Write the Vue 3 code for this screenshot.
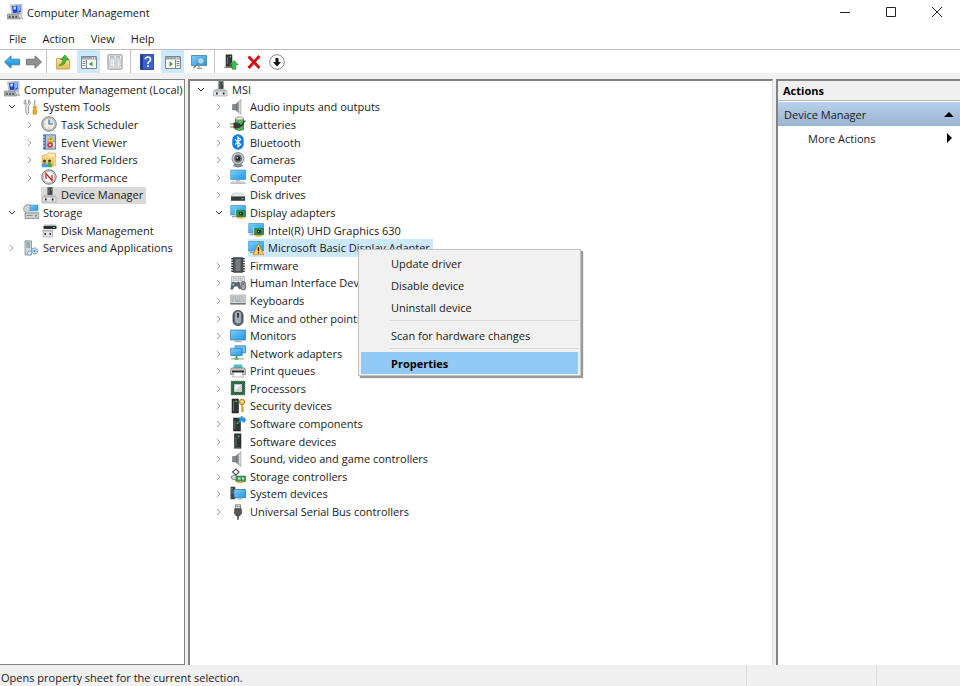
<template>
    <div class="windowBox">
        <svg class="iconSheet" aria-hidden="true">
            <defs>
                <linearGradient id="gScreen" x1="0" y1="0" x2="1" y2="1">
                    <stop offset="0" stop-color="#7cd0fa" />
                    <stop offset="1" stop-color="#1f96e6" />
                </linearGradient>
                <linearGradient id="gBlue" x1="0" y1="0" x2="0" y2="1">
                    <stop offset="0" stop-color="#5cc3f5" />
                    <stop offset="1" stop-color="#1583cf" />
                </linearGradient>
                <linearGradient id="gGrey" x1="0" y1="0" x2="1" y2="0">
                    <stop offset="0" stop-color="#5c6166" />
                    <stop offset="1" stop-color="#c9cdd0" />
                </linearGradient>
                <linearGradient id="gFolder" x1="0" y1="0" x2="0" y2="1">
                    <stop offset="0" stop-color="#fbe6a2" />
                    <stop offset="1" stop-color="#e5b94f" />
                </linearGradient>
            </defs>
            <symbol id="computerMgmt" viewBox="0 0 16 16">
                <path d="M3.500 1 15 .3V9.500L5 10.300z" fill="#cfd5dc" stroke="#98a2ad" stroke-width=".6" />
                <path d="M5 2 13.700 1.400V8.300L6 8.900z" fill="#1c3fd0" />
                <path d="M10 1.700 13.700 1.400V6L10.500 8.500z" fill="#7fb2f7" />
                <path d="M6.500 2.500h2.300v3H6.500z" fill="#dfeaff" />
                <path d="M.5 10h11.500l1 5H.3z" fill="#b6babd" stroke="#6e7377" stroke-width=".6" />
                <path d="M1.700 11.700h2v2.300h-2zM5 11.700h2v2.300H5zM8.300 11.700h2v2.300h-2z" fill="#565d62" />
                <path d="M10.500 9l3.500 1.500 1.700 4.500-3.500-1.500z" fill="#dcdedf" stroke="#777" stroke-width=".5" />
            </symbol>
            <symbol id="tools" viewBox="0 0 16 16">
                <path d="M2.600.8v3.400l1.600 1 1.500-1V.8C7.300 1.700 7.700 3.500 7 5L5.600 6.300V14q-1.400 2-2.700 0V6.300L1.400 5C.7 3.500 1.200 1.600 2.600.8z" fill="#eceeef" stroke="#7c8387" stroke-width=".8" />
                <path d="M11.200 1h1.200v6.500h-1.200z" fill="#9da3a8" />
                <path d="M10.300 7.500h3v2l-.6.8.9 1v3.500q-1.800 1.300-3.600 0v-3.500l.9-1-.6-.8z" fill="#f2b01d" stroke="#b3780a" stroke-width=".6" />
            </symbol>
            <symbol id="clock" viewBox="0 0 16 16">
                <circle cx="8" cy="8" r="7.300" fill="#c6c9cc" stroke="#74797e" stroke-width=".9" />
                <circle cx="8" cy="8" r="5.700" fill="#f7f0dc" stroke="#9ba0a5" stroke-width=".5" />
                <path d="M8 8V2.300A5.700 5.700 0 0 1 13.700 8z" fill="#cfdff3" />
                <path d="M8 3.500V8h3.800" fill="none" stroke="#3b5f95" stroke-width="1.100" />
                <path d="M3.500 8h1M8 12.500v-1" stroke="#777" stroke-width=".8" />
            </symbol>
            <symbol id="eventLog" viewBox="0 0 16 16">
                <path d="M2.500.8h12v14.400h-12z" fill="#aec2da" stroke="#4e6f98" stroke-width=".8" />
                <path d="M2.500.8H5v14.400H2.500z" fill="#5a7da8" />
                <path d="M1.300 3h2.400M1.300 6h2.400M1.300 9h2.400M1.300 12h2.400" stroke="#dfe5eb" stroke-width="1" />
                <path d="M9.800 2.300l3.500 5.200H6.300z" fill="#ffd53a" stroke="#c99100" stroke-width=".5" />
                <path d="M9.800 4.200v1.800" stroke="#5a3b00" stroke-width=".8" />
                <circle cx="9" cy="11" r="2.800" fill="#e2362b" />
                <path d="M8 10l2 2m0-2-2 2" stroke="#fff" stroke-width=".8" />
                <path d="M12.300 8.500h1.500v4h-1.500z" fill="#eef3fa" />
            </symbol>
            <symbol id="sharedFolder" viewBox="0 0 16 16">
                <path d="M1 3.500 6 2.500l1-1.500h7.500V14H1z" fill="url(#gFolder)" stroke="#c69b3d" stroke-width=".6" />
                <path d="M8 2.500h5.500v2H8z" fill="#fdf6dc" />
                <path d="M13 5h1.500v9H13z" fill="#f7dc90" />
                <circle cx="3.500" cy="9" r="1.500" fill="#4d3a26" />
                <path d="M1 15.300c0-3.300.8-4.600 2.500-4.600S6 12 6 15.300z" fill="#3f9ed8" />
                <circle cx="8.500" cy="9" r="1.500" fill="#4d3a26" />
                <path d="M6 15.300c0-3.300.8-4.600 2.500-4.600s2.500 1.300 2.500 4.600z" fill="#4ba64d" />
            </symbol>
            <symbol id="performance" viewBox="0 0 16 16">
                <circle cx="8" cy="8" r="7.200" fill="#d5d7d9" stroke="#73777b" stroke-width="1" />
                <circle cx="8" cy="8" r="5.600" fill="#fff" stroke="#999" stroke-width=".5" />
                <path d="M5 10V4.500L11 11.500V6" fill="none" stroke="#d9221b" stroke-width="1.300" />
            </symbol>
            <symbol id="deviceMgr" viewBox="0 0 16 16">
                <path d="M6.500.3h5v8h-5z" fill="#3d4144" />
                <path d="M7.500 1.300h1v5h-1z" fill="#777c80" />
                <path d="M10 2h1v1h-1z" fill="#49dd4d" />
                <path d="M4 8h8l2.500 2H2z" fill="#c9cccf" stroke="#999ea1" stroke-width=".5" />
                <path d="M1.500 10H15v5H1.500z" fill="#e2e4e6" stroke="#9a9fa3" stroke-width=".6" />
                <path d="M4 11.500h1.700v2H4zM10.800 11.500h1.700v2h-1.700z" fill="#24282b" />
            </symbol>
            <symbol id="storage" viewBox="0 0 16 16">
                <circle cx="4.800" cy="4.800" r="4.200" fill="#cfd3d6" stroke="#858b90" stroke-width=".8" />
                <circle cx="4.800" cy="4.800" r="1.200" fill="#fff" stroke="#888" stroke-width=".4" />
                <path d="M7 1h8v5.500H7z" fill="url(#gScreen)" stroke="#3a7fae" stroke-width=".5" />
                <path d="M2 9l1.500-2h11L16 9z" fill="#eceeef" stroke="#9a9fa3" stroke-width=".5" />
                <path d="M2 9h13.800v5.500H2z" fill="#cdd1d4" stroke="#72787d" stroke-width=".7" />
                <path d="M3.500 11h6v1h-6z" fill="#8a8f93" />
                <path d="M12 11h2v1.500h-2z" fill="#35bd3b" />
            </symbol>
            <symbol id="diskMgmt" viewBox="0 0 16 16">
                <path d="M3.500 2.500h11l1 1.500h-13z" fill="#b4b8bb" />
                <path d="M2.500 4h13v3h-13z" fill="#2b3032" />
                <path d="M12 5h2v1h-2z" fill="#46df4b" />
                <path d="M2 9h9.500v6H2z" fill="#e2e4e6" stroke="#959a9e" stroke-width=".6" />
                <path d="M1 8.300h11" stroke="#8e9397" stroke-width=".8" />
                <path d="M3.500 11h1.500v2H3.500zM8.500 11H10v2H8.500z" fill="#333" />
            </symbol>
            <symbol id="services" viewBox="0 0 16 16">
                <path d="M2 .8h6.500V15H2z" fill="#cfd7de" stroke="#74828f" stroke-width=".7" />
                <path d="M3.300 3h4M3.300 5h4M3.300 7h4" stroke="#657584" stroke-width=".9" />
                <path d="M3.300 1.400h1.400v.8H3.300z" fill="#3fbf49" />
                <circle cx="11.500" cy="11" r="2.900" fill="#dcebf6" stroke="#6da0c7" stroke-width="1.500" stroke-dasharray="1.500 .7" />
                <circle cx="11.500" cy="11" r="1.200" fill="#5b93be" />
                <circle cx="6.500" cy="13" r="2" fill="#dcebf6" stroke="#7fa5c2" stroke-width=".9" />
            </symbol>
            <symbol id="speaker" viewBox="0 0 16 16">
                <path d="M2.500 5.300h3v5.700h-3z" fill="#83898e" stroke="#6a6f73" stroke-width=".5" />
                <path d="M5.500 5.300 11 .6v14.900L5.500 11z" fill="url(#gGrey)" stroke="#8b9196" stroke-width=".5" />
                <path d="M9.800 2.500v11.300" stroke="#e9ebec" stroke-width="1" />
            </symbol>
            <symbol id="battery" viewBox="0 0 16 16">
                <path d="M5.500 2.500Q9.500 0 13.500 2.500V13.500q-4 2-8 0z" fill="#4cc24a" stroke="#4a5a4a" stroke-width=".7" />
                <ellipse cx="9.500" cy="2.400" rx="4" ry="1.500" fill="#e6ebe6" stroke="#6a746a" stroke-width=".5" />
                <path d="M0 8h4M0 11h4" stroke="#8d7426" stroke-width="1.200" />
                <path d="M3.500 6.500h3.500l3.500 1.500v3.500L7 12.500H3.500z" fill="#34383a" />
                <path d="M10 10c4 0 1.500-4.500 5.500-5" fill="none" stroke="#34383a" stroke-width="1.600" />
            </symbol>
            <symbol id="bluetooth" viewBox="0 0 16 16">
                <rect x="2.300" y=".3" width="11.400" height="15.400" rx="5.500" fill="#0b7cf0" />
                <path d="M5 5.300 10.700 10.500 8 13V3l2.700 2.500L5 10.700" fill="none" stroke="#fff" stroke-width="1.200" />
            </symbol>
            <symbol id="camera" viewBox="0 0 16 16">
                <path d="M5 11h6l1.500 3q-4.500 2.500-9 0z" fill="#8a8f93" stroke="#5d6164" stroke-width=".4" />
                <circle cx="8" cy="6.500" r="6" fill="#c4c8cb" stroke="#74797c" stroke-width=".8" />
                <circle cx="8" cy="6.500" r="3.900" fill="#6b6f72" />
                <circle cx="8" cy="6.500" r="2.300" fill="#1c2023" />
                <circle cx="7.400" cy="5.800" r=".9" fill="#cfdae4" />
            </symbol>
            <symbol id="computer" viewBox="0 0 16 16">
                <path d="M.7 1h14.800v9.500H.7z" fill="url(#gScreen)" stroke="#4a90bd" stroke-width=".7" />
                <path d="M6 11h4v1.500H6z" fill="#b2b9be" />
                <path d="M1.500 13h13l1 1.500H.5z" fill="#dde1e4" stroke="#99a1a7" stroke-width=".6" />
            </symbol>
            <symbol id="disk" viewBox="0 0 16 16">
                <path d="M3 6h10l2 3.500H1z" fill="#e6e8e9" stroke="#b5b8bb" stroke-width=".5" />
                <path d="M1 9.500h14v4.300H1z" fill="#34393c" />
                <path d="M11.500 11h2v1.200h-2z" fill="#3fe046" />
            </symbol>
            <symbol id="display" viewBox="0 0 16 16">
                <path d="M.7 1.500h14.800v9.500H.7z" fill="url(#gScreen)" stroke="#4a90bd" stroke-width=".7" />
                <path d="M2 12.700h4" stroke="#8d979f" stroke-width="1.200" />
                <path d="M6 6.500h9.500v6.500H6z" fill="#3a8a48" stroke="#21592b" stroke-width=".5" />
                <path d="M9 8h4v3.300H9z" fill="#1d3a26" />
                <path d="M10 9h1v1h-1z" fill="#8fd39b" />
                <path d="M5.700 5v9" stroke="#d2d6d9" stroke-width="1" />
                <path d="M7.500 13h6v1.700h-6z" fill="#e9b33d" />
            </symbol>
            <symbol id="displayWarn" viewBox="0 0 16 16">
                <path d="M.7 1.500h14.800v9.500H.7z" fill="url(#gScreen)" stroke="#4a90bd" stroke-width=".7" />
                <path d="M2 12.500h4" stroke="#8d979f" stroke-width="1.200" />
                <path d="M10.500 3.800 15.800 14.700H5.200z" fill="#ffd257" stroke="#d08a10" stroke-width=".8" />
                <path d="M10.500 7.300v4M10.500 12.200v1.300" stroke="#222" stroke-width="1.400" />
            </symbol>
            <symbol id="firmware" viewBox="0 0 16 16">
                <path d="M3.500.7h9v14.600h-9z" fill="#4e5356" stroke="#292c2e" stroke-width=".7" />
                <path d="M5.500 2h5v12h-5z" fill="#777c80" />
                <path d="M2.300 1v14M13.700 1v14" stroke="#2c3032" stroke-width="2" stroke-dasharray="1.500 1" />
            </symbol>
            <symbol id="hid" viewBox="0 0 16 16">
                <path d="M1.500 1.500h13V7.500h-13z" fill="#dfe3e5" stroke="#9ca1a5" stroke-width=".6" />
                <path d="M3 3.300h10M3 5.200h10" stroke="#8c9195" stroke-width=".8" stroke-dasharray="1 .7" />
                <path d="M1.500 7.500q2-1.500 3.500 0h2q1.500-1.500 3 .5l1 6H9L7.500 11.500h-3L3 14.500H.3z" fill="#5a656f" />
                <path d="M2 9.500h2.500M3.200 8.300v2.500" stroke="#7fc6ef" stroke-width=".8" />
                <rect x="11" y="6.500" width="4.500" height="8.500" rx="2" fill="#9da6ad" stroke="#4a5258" stroke-width=".7" />
                <path d="M13.200 8v2" stroke="#36414a" stroke-width=".9" />
            </symbol>
            <symbol id="keyboard" viewBox="0 0 16 16">
                <path d="M.4 3h15.200v9H.4z" fill="#d2d5d7" stroke="#9ea3a6" stroke-width=".6" />
                <path d="M1.500 5h13M1.500 7h13" stroke="#8b9094" stroke-width=".9" stroke-dasharray="1.200 .6" />
                <path d="M1.500 9h2M5 9h6M12.500 9h2" stroke="#8b9094" stroke-width=".9" />
                <path d="M.4 11h15.200v1.500H.4z" fill="#6f7579" />
            </symbol>
            <symbol id="mouse" viewBox="0 0 16 16">
                <rect x="3" y=".6" width="10" height="14.800" rx="4.500" fill="#5d6873" stroke="#30373d" stroke-width=".8" />
                <rect x="5" y="1.600" width="6" height="12" rx="3" fill="#a2adb8" />
                <path d="M8 3v4.500" stroke="#252b30" stroke-width="1.700" />
            </symbol>
            <symbol id="monitor" viewBox="0 0 16 16">
                <path d="M.6 2h14.800v10H.6z" fill="url(#gScreen)" stroke="#427ca5" stroke-width=".8" />
                <path d="M6.500 12h3v1.500h-3z" fill="#aab2b8" />
                <path d="M4.500 13.700h7" stroke="#9aa3a9" stroke-width="1" />
            </symbol>
            <symbol id="network" viewBox="0 0 16 16">
                <path d="M5 .8h10.500v7H5z" fill="#6fc3f5" stroke="#3480b5" stroke-width=".8" />
                <path d="M.7 3.300h11.500v7.200H.7z" fill="url(#gScreen)" stroke="#3480b5" stroke-width=".8" />
                <path d="M6.500 10.500v3" stroke="#3fa04a" stroke-width="1.800" />
                <path d="M1 13.800h13" stroke="#9aa5ab" stroke-width="1.200" />
                <path d="M4.500 12.800h4v2h-4z" fill="#4cbf58" />
            </symbol>
            <symbol id="printer" viewBox="0 0 16 16">
                <path d="M4 1.500h8l1 4H3z" fill="#58b5ee" />
                <path d="M6 2.500h5v2H6z" fill="#52c58e" />
                <path d="M1.500 5h13l1 2v4.500H.5V7z" fill="#c3c7ca" stroke="#5e6467" stroke-width=".6" />
                <path d="M2 7.500h12v2H2z" fill="#292d30" />
                <path d="M4 9.500h8l1.500 4.500h-11z" fill="#fff" stroke="#8d9295" stroke-width=".6" />
            </symbol>
            <symbol id="processor" viewBox="0 0 16 16">
                <path d="M1 1h14v14H1z" fill="#2f6b4a" stroke="#7d8a4a" stroke-width=".8" stroke-dasharray="1 1" />
                <path d="M3.800 3.800h8.400v8.400H3.800z" fill="#f0f1f1" stroke="#173e29" stroke-width=".7" />
                <path d="M12 4v8H4z" fill="#cfd2d2" />
            </symbol>
            <symbol id="security" viewBox="0 0 16 16">
                <path d="M2 1h6.500v14H2z" fill="#303537" stroke="#111" stroke-width=".5" />
                <path d="M3 3h1v10H3z" fill="#6e7478" />
                <path d="M5.300 2.500h1.400V4H5.300z" fill="#3ee54a" />
                <circle cx="12" cy="4" r="2.700" fill="#edbd4d" stroke="#ad7912" stroke-width=".8" />
                <circle cx="12" cy="3.400" r=".8" fill="#fff" />
                <path d="M12 6.500V14.500M12 10h2M12 12.500h2" stroke="#d4992a" stroke-width="1.400" />
            </symbol>
            <symbol id="swComponent" viewBox="0 0 16 16">
                <path d="M3.500 2h7v13h-7z" fill="#303537" stroke="#111" stroke-width=".5" />
                <path d="M4.500 5h1v8h-1z" fill="#6e7478" />
                <path d="M6.800 6.500h1.400V8H6.800z" fill="#3ee54a" />
                <path d="M8.500 1.500h2.300V0h1.700v1.500H15v1.700h1v1.600h-1v1.700h-2.500V5.300h-1.700v1.200H8.500V4.800h1.200V3.200H8.500z" fill="#2a90e6" />
            </symbol>
            <symbol id="swDevice" viewBox="0 0 16 16">
                <path d="M4.500.8H11v14.400H4.500z" fill="#303537" stroke="#111" stroke-width=".5" />
                <path d="M5.500 4h1v9h-1z" fill="#6e7478" />
                <path d="M7.800 2.500h1.500v1.700H7.800z" fill="#3ee54a" />
                <path d="M3.500 15h8.500" stroke="#888" stroke-width=".8" />
            </symbol>
            <symbol id="storageCtl" viewBox="0 0 16 16">
                <path d="M2.500 4 6 1 9 4 6 7z" fill="#fff" stroke="#4c5154" stroke-width="1.100" />
                <path d="M1 8.500 4.500 7l4 2-1 3.500-5.500-1.500z" fill="#d3d7d9" stroke="#54595c" stroke-width=".7" />
                <path d="M6 8h9.500v5.500H6z" fill="#3b9850" stroke="#245c30" stroke-width=".5" />
                <path d="M8 9.500h2.500v2H8zM12 9.500h2v2h-2z" fill="#cfe8d4" />
                <path d="M7 13.500h6V15H7z" fill="#e6b039" />
            </symbol>
            <symbol id="system" viewBox="0 0 16 16">
                <path d="M.5.7h4.800v12.500H.5z" fill="#3c4347" />
                <path d="M1.300 2h1.200v1.200H1.300z" fill="#4be052" />
                <path d="M1.300 5h3M1.300 7h3" stroke="#8a9297" stroke-width=".7" />
                <path d="M4 3.500h11.500v8.200H4z" fill="url(#gScreen)" stroke="#3b779f" stroke-width=".8" />
                <path d="M7.500 13h5" stroke="#a4adb3" stroke-width="1.200" />
            </symbol>
            <symbol id="usb" viewBox="0 0 16 16">
                <path d="M5.500.8h5v4h-5z" fill="#e6e8e9" stroke="#676c70" stroke-width=".8" />
                <path d="M6.800 2h.8v1.200h-.8zM8.600 2h.8v1.200h-.8z" fill="#444" />
                <path d="M4.500 4.800h7v5L9.500 12h-3l-2-2.200z" fill="#54595d" stroke="#2d3134" stroke-width=".5" />
                <path d="M8 12v3.700" stroke="#4a4f52" stroke-width="1.600" />
            </symbol>
            <symbol id="back" viewBox="0 0 16 16">
                <path d="M.5 8 7 1.800v3.400h8.500v5.600H7v3.400z" fill="url(#gBlue)" stroke="#2377ad" stroke-width=".8" />
            </symbol>
            <symbol id="forward" viewBox="0 0 16 16">
                <path d="M15.500 8 9 1.800v3.400H.5v5.600H9v3.400z" fill="#8d9194" stroke="#606467" stroke-width=".8" />
            </symbol>
            <symbol id="upFolder" viewBox="0 0 16 16">
                <path d="M1.500 4.500h5l1.500 1.500h6.500v9h-13z" fill="url(#gFolder)" stroke="#c39a41" stroke-width=".8" />
                <path d="M4 11.500Q7.500 10 8 5.500H5.500L10 1l4 4.500h-2.800Q10.500 11.500 4 11.500z" fill="#4bb93c" stroke="#237c1c" stroke-width=".6" />
            </symbol>
            <symbol id="paneLeft" viewBox="0 0 16 16">
                <path d="M.5 2.500h15v12H.5z" fill="#fafafa" stroke="#81868b" stroke-width="1" />
                <path d="M1 3h14v2.500H1z" fill="#a0a7ae" />
                <path d="M11 4h1m1 0h1" stroke="#fff" stroke-width="1" />
                <path d="M5.500 6v8M1.500 7.500h3M1.500 9.500h3M1.500 11.500h3" stroke="#737a80" stroke-width=".9" />
                <path d="M11.500 7.500v5L8 10z" fill="#35a52d" />
            </symbol>
            <symbol id="paneRight" viewBox="0 0 16 16">
                <path d="M.5 2.500h15v12H.5z" fill="#fafafa" stroke="#81868b" stroke-width="1" />
                <path d="M1 3h14v2.500H1z" fill="#a0a7ae" />
                <path d="M11 4h1m1 0h1" stroke="#fff" stroke-width="1" />
                <path d="M10.500 6v8M11.500 7.500h3M11.500 9.500h3M11.500 11.500h3" stroke="#737a80" stroke-width=".9" />
                <path d="M4.500 7.500v5L8 10z" fill="#35a52d" />
            </symbol>
            <symbol id="sheet" viewBox="0 0 16 16">
                <rect x="1" y=".8" width="14" height="14.400" rx="1" fill="#f3f4f4" stroke="#858a8e" stroke-width="1" />
                <path d="M3 3h4.500M9 3h4" stroke="#85898d" stroke-width="1" />
                <path d="M3 5h10v8H3z" fill="#fff" stroke="#a1a6aa" stroke-width=".8" />
                <path d="M4.500 7h1.200M4.500 9h1.200M4.500 11h1.200M7 7h4.500M7 9h4.500M7 11h4.500" stroke="#9aa7b5" stroke-width="1" />
            </symbol>
            <symbol id="help" viewBox="0 0 16 16">
                <path d="M1.500.5h13v15h-13z" fill="#3a5fd0" stroke="#1d3588" stroke-width=".8" />
                <path d="M1.500.8h2.500v14.400H1.500z" fill="#1e3c9c" />
                <path d="M6.300 5.300Q6.500 3 9 3t2.500 2.400Q11.500 7 10 7.800 9 8.400 9 10" fill="none" stroke="#fff" stroke-width="1.600" />
                <path d="M8.100 11.300h1.800V13H8.100z" fill="#fff" />
            </symbol>
            <symbol id="scanMonitor" viewBox="0 0 16 16">
                <path d="M.4 1.500h15.200v10H.4z" fill="url(#gScreen)" stroke="#427ca5" stroke-width=".8" />
                <path d="M8 11.500v2M6 14.300h5" stroke="#8d969c" stroke-width="1.300" />
                <circle cx="9.800" cy="6.800" r="3.300" fill="#a6dbf8" stroke="#5f8aa6" stroke-width=".8" />
                <path d="M7.300 9.300 2.500 14" stroke="#747d84" stroke-width="1.600" />
            </symbol>
            <symbol id="addDevice" viewBox="0 0 16 16">
                <path d="M3 .8h6v11.700H3z" fill="#35393c" stroke="#16191b" stroke-width=".5" />
                <path d="M4 3h1v7H4z" fill="#6e7478" />
                <path d="M6.700 2H8v1.300H6.700z" fill="#43e84b" />
                <path d="M1.500 12.500h8V14h-8z" fill="#7b8084" />
                <path d="M11 6.500l4.300 4.300h-2.400v4.400H9.100v-4.400H6.700z" fill="#43ba4b" stroke="#258530" stroke-width=".6" />
            </symbol>
            <symbol id="remove" viewBox="0 0 16 16">
                <path d="M2.500 2.500 13.500 14M13.500 2 2.500 14" stroke="#db0d12" stroke-width="2.800" />
            </symbol>
            <symbol id="downCircle" viewBox="0 0 16 16">
                <circle cx="8" cy="8" r="7.300" fill="#fff" stroke="#84878a" stroke-width="1" />
                <path d="M6.500 4h3v4H12l-4 4.500L4 8h2.500z" fill="#111" />
            </symbol>
        </svg>

        <header class="titleBar">
            <svg class="iconItem"><use href="#computerMgmt" /></svg>
            <h1>Computer Management</h1>
            <div class="windowControls">
                <button aria-label="Minimize"><svg viewBox="0 0 12 12"><path d="M1 6.500h10" /></svg></button>
                <button aria-label="Maximize"><svg viewBox="0 0 12 12"><path d="M1.500 1.500h9v9h-9z" /></svg></button>
                <button aria-label="Close"><svg viewBox="0 0 12 12"><path d="M1 1l10 10M11 1 1 11" /></svg></button>
            </div>
        </header>

        <nav class="menuBar">
            <button v-for="m in ['File', 'Action', 'View', 'Help']" :key="m">{{ m }}</button>
        </nav>

        <div class="toolBar">
            <div v-for="(group, i) in toolGroups" :key="i" class="toolGroup">
                <button v-for="t in group" :key="t.icon" :class="{ active: t.active }" :aria-label="t.label">
                    <svg class="iconItem"><use :href="'#' + t.icon" /></svg>
                </button>
            </div>
        </div>

        <main class="paneRow">
            <section class="paneBox sidePane">
                <ul class="treeList">
                    <li v-for="node in consoleTree" :key="node.name" class="treeRow" :class="'level' + node.level">
                        <button v-if="node.level" class="chevron" :class="node.state" :disabled="!node.state"
                            :aria-label="'Expand ' + node.name">
                            <svg v-if="node.state" viewBox="0 0 8 8"><path d="M2 1l3 3-3 3" /></svg>
                        </button>
                        <button class="nodeItem" :class="{ current: node.name === consoleNode }"
                            @click="consoleNode = node.name">
                            <svg class="iconItem"><use :href="'#' + node.icon" /></svg>
                            <span>{{ node.name }}</span>
                        </button>
                    </li>
                </ul>
            </section>

            <section class="paneBox devicePane">
                <ul class="treeList">
                    <li v-for="node in deviceTree" :key="node.name" class="treeRow" :class="'level' + node.level">
                        <button class="chevron" :class="node.state" :disabled="!node.state"
                            :aria-label="'Expand ' + node.name">
                            <svg v-if="node.state" viewBox="0 0 8 8"><path d="M2 1l3 3-3 3" /></svg>
                        </button>
                        <button class="nodeItem" :class="{ selected: node.name === selectedDevice }"
                            @click="selectedDevice = node.name" @contextmenu.prevent="openMenu(node)">
                            <svg class="iconItem"><use :href="'#' + node.icon" /></svg>
                            <span>{{ node.name }}</span>
                        </button>
                        <div v-if="showMenu && node.name === selectedDevice" class="contextMenu">
                            <template v-for="(group, i) in menuGroups" :key="i">
                                <hr v-if="i" />
                                <button v-for="item in group" :key="item" :class="{ highlight: item === 'Properties' }"
                                    @click="showMenu = false">{{ item }}</button>
                            </template>
                        </div>
                    </li>
                </ul>
            </section>

            <aside class="paneBox actionPane">
                <h2>Actions</h2>
                <button class="actionHead">
                    Device Manager
                    <svg viewBox="0 0 10 10"><path d="M0 8 5 3l5 5z" /></svg>
                </button>
                <button class="actionLink">
                    More Actions
                    <svg viewBox="0 0 10 10"><path d="M3 0l5 5-5 5z" /></svg>
                </button>
            </aside>
        </main>

        <footer class="statusBar">
            <p>Opens property sheet for the current selection.</p>
            <span class="statusCell"></span>
            <span class="statusCell narrow"></span>
        </footer>
    </div>
</template>

<script setup>
import { ref } from 'vue'

const consoleNode = ref('Device Manager')
const selectedDevice = ref('Microsoft Basic Display Adapter')
const showMenu = ref(true)

const toolGroups = [
    [{ icon: 'back', label: 'Back' }, { icon: 'forward', label: 'Forward' }],
    [
        { icon: 'upFolder', label: 'Up one level' },
        { icon: 'paneLeft', label: 'Show/Hide Console Tree', active: true },
        { icon: 'sheet', label: 'Properties' }
    ],
    [
        { icon: 'help', label: 'Help' },
        { icon: 'paneRight', label: 'Show/Hide Action Pane', active: true },
        { icon: 'scanMonitor', label: 'Scan for hardware changes' }
    ],
    [
        { icon: 'addDevice', label: 'Update driver' },
        { icon: 'remove', label: 'Uninstall device' },
        { icon: 'downCircle', label: 'Disable device' }
    ]
]

const consoleTree = [
    { name: 'Computer Management (Local)', icon: 'computerMgmt', level: 0 },
    { name: 'System Tools', icon: 'tools', level: 1, state: 'open' },
    { name: 'Task Scheduler', icon: 'clock', level: 2, state: 'closed' },
    { name: 'Event Viewer', icon: 'eventLog', level: 2, state: 'closed' },
    { name: 'Shared Folders', icon: 'sharedFolder', level: 2, state: 'closed' },
    { name: 'Performance', icon: 'performance', level: 2, state: 'closed' },
    { name: 'Device Manager', icon: 'deviceMgr', level: 2 },
    { name: 'Storage', icon: 'storage', level: 1, state: 'open' },
    { name: 'Disk Management', icon: 'diskMgmt', level: 2 },
    { name: 'Services and Applications', icon: 'services', level: 1, state: 'closed' }
]

const deviceTree = [
    { name: 'MSI', icon: 'deviceMgr', level: 0, state: 'open' },
    { name: 'Audio inputs and outputs', icon: 'speaker', level: 1, state: 'closed' },
    { name: 'Batteries', icon: 'battery', level: 1, state: 'closed' },
    { name: 'Bluetooth', icon: 'bluetooth', level: 1, state: 'closed' },
    { name: 'Cameras', icon: 'camera', level: 1, state: 'closed' },
    { name: 'Computer', icon: 'computer', level: 1, state: 'closed' },
    { name: 'Disk drives', icon: 'disk', level: 1, state: 'closed' },
    { name: 'Display adapters', icon: 'display', level: 1, state: 'open' },
    { name: 'Intel(R) UHD Graphics 630', icon: 'display', level: 2 },
    { name: 'Microsoft Basic Display Adapter', icon: 'displayWarn', level: 2 },
    { name: 'Firmware', icon: 'firmware', level: 1, state: 'closed' },
    { name: 'Human Interface Devices', icon: 'hid', level: 1, state: 'closed' },
    { name: 'Keyboards', icon: 'keyboard', level: 1, state: 'closed' },
    { name: 'Mice and other pointing devices', icon: 'mouse', level: 1, state: 'closed' },
    { name: 'Monitors', icon: 'monitor', level: 1, state: 'closed' },
    { name: 'Network adapters', icon: 'network', level: 1, state: 'closed' },
    { name: 'Print queues', icon: 'printer', level: 1, state: 'closed' },
    { name: 'Processors', icon: 'processor', level: 1, state: 'closed' },
    { name: 'Security devices', icon: 'security', level: 1, state: 'closed' },
    { name: 'Software components', icon: 'swComponent', level: 1, state: 'closed' },
    { name: 'Software devices', icon: 'swDevice', level: 1, state: 'closed' },
    { name: 'Sound, video and game controllers', icon: 'speaker', level: 1, state: 'closed' },
    { name: 'Storage controllers', icon: 'storageCtl', level: 1, state: 'closed' },
    { name: 'System devices', icon: 'system', level: 1, state: 'closed' },
    { name: 'Universal Serial Bus controllers', icon: 'usb', level: 1, state: 'closed' }
]

const menuGroups = [
    ['Update driver', 'Disable device', 'Uninstall device'],
    ['Scan for hardware changes'],
    ['Properties']
]

const openMenu = (node) => {
    selectedDevice.value = node.name
    showMenu.value = true
}
</script>

<style>
body {
    margin: 0;
}
</style>

<style scoped>
.windowBox {
    display: flex;
    flex-direction: column;
    min-height: 100vh;
    background: #f0f0f0;
    color: #1a1a1a;
    font-family: 'Open Sans', 'Noto Sans', sans-serif;
    font-size: 11px;
}

.windowBox * {
    box-sizing: border-box;
}

button {
    font: inherit;
    color: inherit;
    background: none;
    border: none;
    padding: 0;
    text-align: left;
    white-space: nowrap;
}

.iconSheet {
    position: absolute;
    width: 0;
    height: 0;
}

.iconItem {
    width: 16px;
    height: 16px;
    flex: none;
}

/* title bar */
.titleBar {
    display: flex;
    align-items: center;
    gap: 4px;
    height: 24px;
    padding-left: 7px;
    background: #fff;
}

.titleBar h1 {
    flex: 1;
    margin: 0;
    font-size: 11px;
    font-weight: 400;
}

.windowControls {
    display: flex;
}

.windowControls button {
    display: flex;
    align-items: center;
    justify-content: center;
    width: 46px;
    height: 24px;
}

.windowControls svg {
    width: 12px;
    height: 12px;
    fill: none;
    stroke: #222;
}

/* menu and tool bars */
.menuBar {
    display: flex;
    gap: 16px;
    height: 26px;
    padding: 4px 0 0 9px;
    background: #fff;
    border-bottom: 1px solid #bdbdbd;
}

.toolBar {
    display: flex;
    height: 23px;
    background: #fff;
}

.toolGroup {
    display: flex;
    gap: 3px;
    padding: 0 4px;
    border-right: 1px solid #c4c4c4;
}

.toolGroup:first-child {
    gap: 6px;
}

.toolGroup:last-child {
    gap: 0;
    border-right: none;
}

.toolGroup button {
    display: flex;
    align-items: center;
    justify-content: center;
    width: 23px;
}

.toolGroup:first-child button {
    width: 16px;
}

.toolGroup button.active {
    background: #cce8ff;
}

/* panes */
.paneRow {
    flex: 1;
    display: grid;
    grid-template-columns: 185px 1fr 184px;
    gap: 3px;
    padding: 6px 0 1px;
}

.paneBox {
    background: #fff;
    border: 0 solid #828282;
    border-top-width: 2px;
}

.sidePane {
    border-width: 1px 1px 1px 0;
    padding-top: 1px;
}

.devicePane {
    border-left-width: 2px;
    border-right: 1px solid #dcdcdc;
}

.actionPane {
    border-left-width: 2px;
}

/* trees */
.treeList {
    margin: 0;
    padding: 0;
    list-style: none;
}

.treeRow {
    position: relative;
    display: flex;
    gap: 2px;
    height: 1.6em;
}

.sidePane .level0 {
    padding-left: 4px;
}

.sidePane .level1 {
    padding-left: 3px;
}

.sidePane .level2 {
    padding-left: 21px;
}

.devicePane .level0 {
    padding-left: 2px;
}

.devicePane .level1 {
    padding-left: 20px;
}

.devicePane .level2 {
    padding-left: 38px;
}

.chevron {
    display: flex;
    align-items: center;
    justify-content: center;
    width: 18px;
}

.chevron svg {
    width: 8px;
    height: 8px;
    fill: none;
    stroke: #a0a0a0;
}

.chevron.open svg {
    stroke: #333;
    transform: rotate(90deg);
}

.nodeItem {
    display: flex;
    align-items: center;
    gap: 4px;
    padding: 0 3px 1px 0;
}

.nodeItem.current {
    background: #d9d9d9;
}

.nodeItem.selected {
    background: #cce8ff;
}

/* context menu over the tree */
.contextMenu {
    position: absolute;
    top: 10px;
    left: 168px;
    z-index: 10;
    display: flex;
    flex-direction: column;
    width: 223px;
    padding: 2px 2px 1px;
    background: #f1f1f1;
    border: 1px solid #c4c4c4;
    box-shadow: 2px 2px 1px rgba(0, 0, 0, 0.4);
}

.contextMenu button {
    height: 22px;
    padding-left: 30px;
}

.contextMenu button.highlight {
    background: #91c9f7;
    color: #000;
    font-weight: 700;
}

.contextMenu hr {
    width: 190px;
    margin: 2px 0 3px 28px;
    border: 0;
    border-top: 1px solid #dadada;
}

/* actions pane */
.actionPane h2 {
    height: 20px;
    margin: 0 0 1px;
    padding-left: 5px;
    border-bottom: 1px solid #b5b5b5;
    background: #f0f0f0;
    color: #000;
    font-size: 11px;
    line-height: 20px;
}

.actionHead,
.actionLink {
    display: flex;
    align-items: center;
    justify-content: space-between;
    width: 100%;
    height: 24px;
    padding: 0 6px;
}

.actionHead {
    background: linear-gradient(#b9d1ea, #9ab3d2);
}

.actionLink {
    padding-left: 30px;
}

.actionPane svg {
    width: 10px;
    height: 10px;
    fill: #000;
}

/* status bar */
.statusBar {
    display: flex;
    height: 20px;
    line-height: 24px;
}

.statusBar p {
    flex: 1;
    margin: 0;
    padding-left: 1px;
}

.statusCell {
    width: 130px;
    border-left: 1px solid #dcdcdc;
}

.statusCell.narrow {
    width: 84px;
}
</style>
